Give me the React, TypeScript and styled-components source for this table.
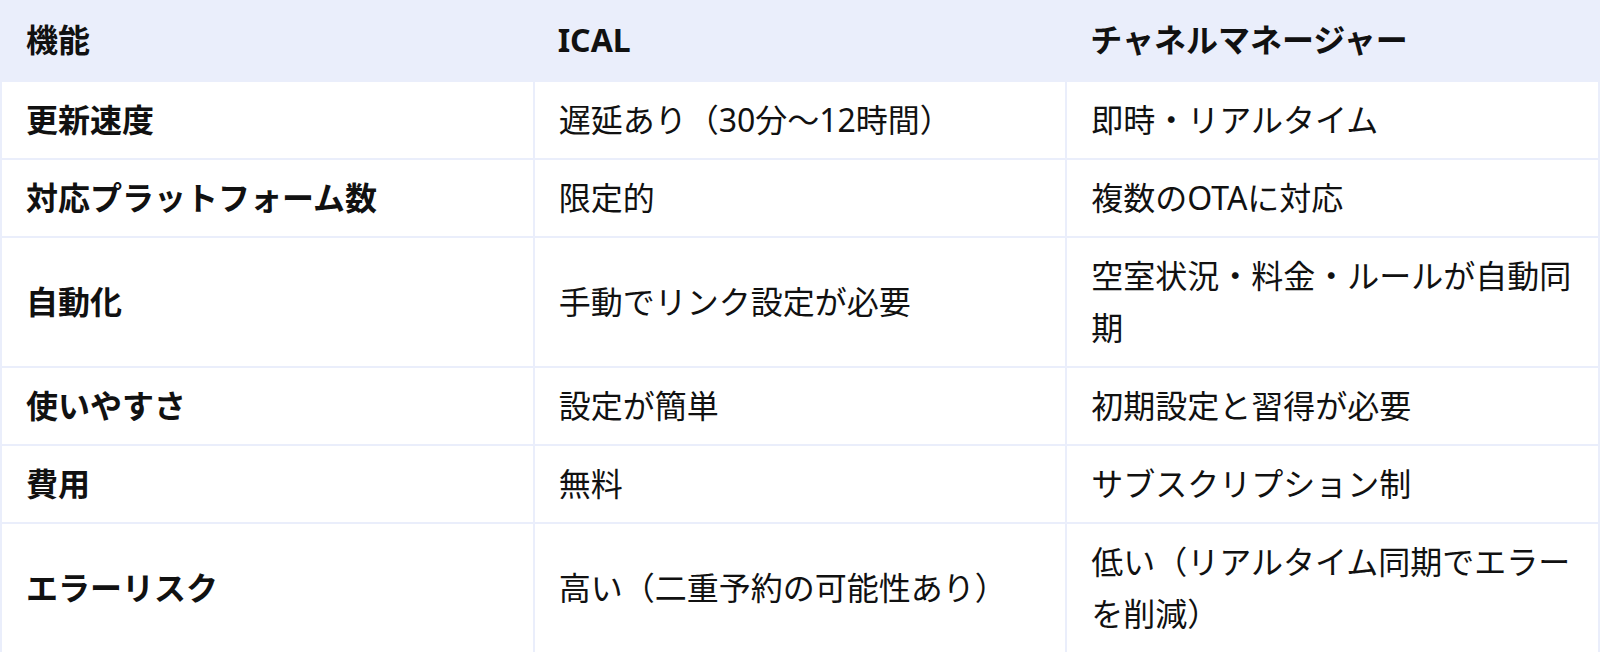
import React from 'react';
import styled, { createGlobalStyle } from 'styled-components';

const GlobalStyle = createGlobalStyle`
  html, body {
    margin: 0;
    padding: 0;
    background: #ffffff;
  }
  body {
    font-family: "Noto Sans", "Noto Sans CJK JP", sans-serif;
    color: #111111;
  }
`;

const Table = styled.table`
  width: 100%;
  table-layout: fixed;
  border-collapse: collapse;
  border: 2px solid #eaeefb;
  border-top: none;
  font-size: 32px;
  line-height: 52px;
`;

const HeadCell = styled.th`
  background: #eaeefb;
  padding: 14px 24px;
  text-align: left;
  font-weight: 700;
  color: #111111;
`;

const Cell = styled.td<{ $label?: boolean }>`
  border: 2px solid #eaeefb;
  padding: 12px 24px;
  vertical-align: middle;
  font-weight: ${(p) => (p.$label ? 700 : 400)};
  color: #111111;
`;

const rows = [
  ['更新速度', '遅延あり（30分〜12時間）', '即時・リアルタイム'],
  ['対応プラットフォーム数', '限定的', '複数のOTAに対応'],
  ['自動化', '手動でリンク設定が必要', '空室状況・料金・ルールが自動同期'],
  ['使いやすさ', '設定が簡単', '初期設定と習得が必要'],
  ['費用', '無料', 'サブスクリプション制'],
  ['エラーリスク', '高い（二重予約の可能性あり）', '低い（リアルタイム同期でエラーを削減）'],
];

export default function App() {
  return (
    <>
      <GlobalStyle />
      <Table>
        <thead>
          <tr>
            <HeadCell>機能</HeadCell>
            <HeadCell>ICAL</HeadCell>
            <HeadCell>チャネルマネージャー</HeadCell>
          </tr>
        </thead>
        <tbody>
          {rows.map((r) => (
            <tr key={r[0]}>
              <Cell $label>{r[0]}</Cell>
              <Cell>{r[1]}</Cell>
              <Cell>{r[2]}</Cell>
            </tr>
          ))}
        </tbody>
      </Table>
    </>
  );
}
